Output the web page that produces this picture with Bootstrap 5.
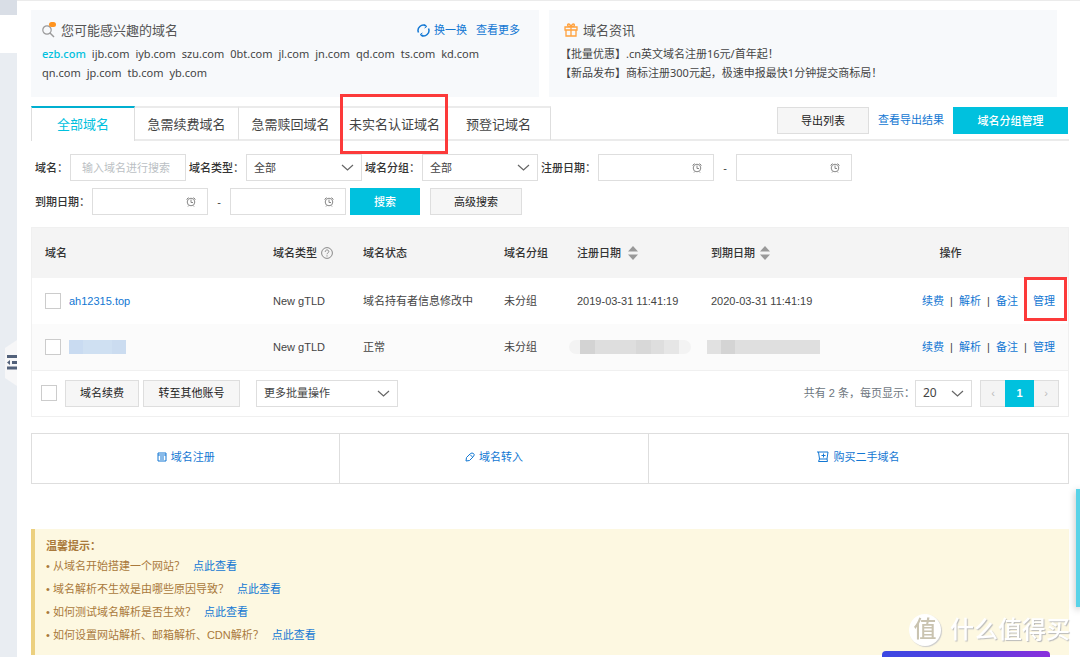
<!DOCTYPE html>
<html lang="zh-CN">
<head>
<meta charset="utf-8">
<meta name="viewport" content="width=device-width, initial-scale=1">
<title>域名列表</title>
<link href="https://cdn.jsdelivr.net/npm/bootstrap@5.3.0/dist/css/bootstrap.min.css" rel="stylesheet">
<style>
:root { --cyan:#00c1de; --blue:#1277d3; --line:#dedede; --soft:#ebebeb; --alert:#fc3a3a; }
body { font:11px/18px "Liberation Sans","Noto Sans CJK SC",sans-serif; color:#444; background:#fff; }
a { color:var(--blue); text-decoration:none; }
svg { fill:none; stroke:currentColor; flex:none; }
.rail { width:17px; background:#e9edf2; flex:none; }
.rail-top { height:15px; background:#d9dee6; }
.rail-gap { height:38px; background:#fff; }
.rail-toggle { left:5px; top:340px; width:12px; height:46px; }
.page-main { padding:0 11px 2px 14px; border-top:1px solid var(--soft); min-width:0; }
.panels { padding:9px 12px 9px 0; gap:10px; }
.panel { background:#f7f9fb; height:87px; padding:11px 11px; font-family:"Noto Sans","Noto Sans CJK SC",sans-serif; }
.panel-head { height:18px; gap:5px; margin-bottom:5px; }
.panel h2 { font-size:13px; line-height:18px; margin:0; font-weight:400; color:#555; }
.panel li { line-height:19px; }
.gift { color:#ffa13d; }
.help { color:#888; }
.words { line-height:19px; column-gap:6px; }
.words a { color:#444; }
.words a.hot { color:var(--cyan); font-weight:500; }
.tabbar { border-bottom:2px solid var(--soft); height:35px; }
.tabs { height:35px; }
.tabs a { width:104px; height:34px; font-size:13px; line-height:33px; color:#444; border-top:2px solid var(--soft); border-right:1px solid var(--line); text-align:center; }
.tabs a.on { height:35px; background:#fff; border-top-color:#00afd0; border-left:1px solid var(--line); color:var(--cyan); }
.tab-tools { gap:9px; padding:1px 1px 0 0; }
.ring { position:absolute; border:3px solid var(--alert); z-index:3; pointer-events:none; }
.ring-tab { inset:-14px -2px -14px -3px; }
.ring-link { inset:-18px -12px -14px -9px; }
.act { height:27px; border-radius:0; font-size:11px; line-height:18px; padding:0; }
.act-gray { background:#f6f6f6; border:1px solid var(--line); color:#222; }
.act-cyan { background:var(--cyan); border:1px solid var(--cyan); color:#fff; font-weight:500; }
.w92 { width:92px; } .w70 { width:70px; } .w115 { width:115px; } .w74 { width:74px; } .w97 { width:97px; }
.filters { padding:13px 4px 12px; gap:7px 3px; }
.filter-go { gap:10px; margin-left:1px; }
.pair { gap:2px; }
.pair label { font-weight:500; color:#333; }
.box, .pick { height:27px; width:116px; border:1px solid var(--line); border-radius:0; font-size:11px; line-height:18px; color:#444; padding:3px 11px; }
.box::placeholder { color:#bbbfc4; }
.pick { padding:3px 24px 3px 7px; background-position:right 7px center; background-size:13px 13px;
 background-image:url("data:image/svg+xml,%3Csvg xmlns='http://www.w3.org/2000/svg' viewBox='0 0 13 13' fill='none' stroke='%23666' stroke-width='1.2'%3E%3Cpath d='M1 4l5.5 5L12 4'/%3E%3C/svg%3E"); }
.clock { position:absolute; right:12px; top:9px; color:#888; }
.dash { width:22px; text-align:center; }
.listing { border:1px solid #f0f0f0; }
.grid-data { table-layout:fixed; width:100%; }
.grid-data th { background:#f4f4f4; height:50px; font-weight:500; color:#333; padding:0 8px; }
.grid-data td { height:46px; padding:0 8px; }
.grid-data tbody tr:last-child { background:#fbfbfb; border-bottom:1px solid #f0f0f0; }
.grid-data th:first-child, .grid-data td:first-child { padding-left:13px; }
.grid-data .ops { text-align:right; padding-right:13px; }
.c-type { width:90px; } .c-state { width:141px; } .c-group { width:73px; } .c-reg { width:134px; } .c-exp { width:130px; } .c-ops { width:235px; }
.ops span.bar { display:inline-block; width:15px; text-align:center; }
.tick { width:16px; height:16px; border:1px solid #ccc; border-radius:0 !important; margin:0; flex:none; }
.hid { height:14px; }
.hid-name { width:57px; background:linear-gradient(90deg,#c9dbf1 25%,#cfe0f2 25% 75%,#cbdcf0 75%); }
.hid-reg { width:122px; margin-left:-8px; border-radius:7px; background:linear-gradient(90deg,#f3f3f3 9%,#d3d3d3 9% 21%,#dedede 21% 55%,#d8d8d8 55% 67%,#dedede 67% 78%,#e6e6e6 78% 90%,#f3f3f3 90%); }
.hid-exp { width:113px; margin-left:-4px; background:linear-gradient(90deg,#e1e1e1 12%,#d4d4d4 12% 25%,#dfdfdf 25%); }
.batch { height:45px; padding:0 9px; }
.pick-more { width:142px; } .pick-size { width:57px; font-family:"Noto Sans",sans-serif; font-size:12px; }
.pg { gap:0; margin:0; }
.pg .page-link { width:26px; height:27px; padding:0; font-size:11px; line-height:25px; text-align:center; border-radius:0 !important; border-color:var(--line); background:#f4f4f4; color:#bbb; margin:0; }
.pg .active .page-link { width:29px; background:var(--cyan); border-color:var(--cyan); color:#fff; font-weight:700; }
.quick { margin-top:16px; border:1px solid var(--line); height:51px; padding-bottom:2px; }
.quick a { flex:22 1 0; gap:4px; margin-bottom:-2px; padding-bottom:2px; }
.quick a + a { border-left:1px solid var(--line); }
.quick a:last-child { flex-grow:30; }
.tips { margin-top:45px; background:#fdf8e1; border-left:4px solid #ecd07f; padding:8px 11px; color:#a9793b; }
.tips h3 { font-size:11px; line-height:18px; font-weight:700; margin:0; }
.tips li { line-height:23px; }
.tips a { margin-left:8px; }
.brand-mark { position:fixed; right:10px; bottom:10px; color:#fff; gap:9px; font-size:24px; line-height:34px; font-weight:500; text-shadow:1px 1px 1px #bbb; white-space:nowrap; }
.brand-mark i { width:32px; height:32px; line-height:30px; border-radius:50%; background:#fff; color:#c9c3b0; text-align:center; text-shadow:none; box-shadow:1px 1px 1px #ccc; font-size:23px; font-style:normal; }
.promo { position:fixed; right:30px; bottom:0; width:168px; height:6px; border-radius:4px 4px 0 0; background:linear-gradient(90deg,#3b48e2,#5d3bdf 60%,#8a2fdc); }
.side-tab { position:fixed; right:0; top:489px; width:4px; height:118px; background:#59d3e8; box-shadow:0 2px 7px #aaa; }
</style>
</head>
<body>
<div class="d-flex min-vh-100">
 <aside class="rail position-relative">
  <div class="rail-top"></div><div class="rail-gap"></div>
  <svg class="rail-toggle position-absolute" viewBox="0 0 12 46"><path d="M12 0v46L0 38V8z" fill="#f7f7f8" stroke="none"/><path d="M2 16.500h10M7 22.500h5M2 28h10" stroke="#52617a" stroke-width="3"/><path d="M2 22.500l3-2.500v5z" fill="#52617a" stroke="none"/></svg>
 </aside>
 <main class="page-main flex-grow-1">
  <div class="panels d-flex">
   <section class="panel flex-fill w-50">
    <div class="panel-head d-flex align-items-center">
     <svg width="14" height="16" viewBox="0 0 14 16"><circle cx="5" cy="8" r="4.200" stroke="#999" stroke-width="1.200"/><path d="M8 11l4 4" stroke="#999" stroke-width="1.400"/><rect x="7" y="0" width="7" height="5" rx="2.500" fill="#ff9420" stroke="none"/></svg>
     <h2>您可能感兴趣的域名</h2>
     <a class="ms-auto d-flex align-items-center gap-1" href="#"><svg width="13" height="13" viewBox="0 0 13 13" stroke-width="1.500"><path d="M1.500 8.500A5.200 5.200 0 0 1 9 2M11.500 4.500A5.200 5.200 0 0 1 4 11"/><path d="M7.500.500L9.800 2.500 7.600 4M5.500 12.500L3.200 10.500 5.400 9" stroke-width="1"/></svg>换一换</a>
     <a class="ms-1 me-2" href="#">查看更多</a>
    </div>
    <div class="words d-flex flex-wrap pe-5"><a class="hot" href="#">ezb.com</a><a href="#">ijb.com</a><a href="#">iyb.com</a><a href="#">szu.com</a><a href="#">0bt.com</a><a href="#">jl.com</a><a href="#">jn.com</a><a href="#">qd.com</a><a href="#">ts.com</a><a href="#">kd.com</a><a href="#">qn.com</a><a href="#">jp.com</a><a href="#">tb.com</a><a href="#">yb.com</a></div>
   </section>
   <section class="panel flex-fill w-50">
    <div class="panel-head d-flex align-items-center px-1">
     <svg class="gift" width="14" height="14" viewBox="0 0 14 14" stroke-width="1.300"><path d="M1 4h12v3H1zM2 7v6h10V7M7 4v9M7 4C3 4 3 1 4.500 1S7 4 7 4s1-3 2.500-3S11 4 7 4"/></svg>
     <h2>域名资讯</h2>
    </div>
    <ul class="list-unstyled mb-0"><li>【批量优惠】.cn英文域名注册16元/首年起！</li><li>【新品发布】商标注册300元起，极速申报最快1分钟提交商标局！</li></ul>
   </section>
  </div>

  <div class="tabbar d-flex justify-content-between">
   <nav class="tabs d-flex">
    <a class="on" href="#">全部域名</a><a href="#">急需续费域名</a><a href="#">急需赎回域名</a><a class="position-relative" href="#">未实名认证域名<span class="ring ring-tab"></span></a><a href="#">预登记域名</a>
   </nav>
   <div class="tab-tools d-flex align-items-start">
    <button type="button" class="btn act act-gray w92">导出列表</button>
    <a class="pt-1" href="#">查看导出结果</a>
    <button type="button" class="btn act act-cyan w115">域名分组管理</button>
   </div>
  </div>

  <form class="filters d-flex flex-wrap">
   <div class="pair d-flex align-items-center"><label for="name">域名：</label><input id="name" class="form-control box" placeholder="输入域名进行搜索"></div>
   <div class="pair d-flex align-items-center"><label for="type">域名类型：</label><select id="type" class="form-select pick"><option>全部</option></select></div>
   <div class="pair d-flex align-items-center"><label for="group">域名分组：</label><select id="group" class="form-select pick"><option>全部</option></select></div>
   <div class="pair d-flex align-items-center"><label for="reg1">注册日期：</label>
    <div class="d-flex align-items-center"><div class="position-relative"><input id="reg1" class="form-control box"><svg class="clock" width="10" height="10" viewBox="0 0 10 10"><circle cx="5" cy="5" r="3.800"/><path d="M5 2.500V5.500H7M.500 2.500L2.500.500M9.500 2.500L7.500.500M2 9.500l1-1M8 9.500l-1-1"/></svg></div><span class="dash">-</span><div class="position-relative"><input aria-label="注册日期止" class="form-control box"><svg class="clock" width="10" height="10" viewBox="0 0 10 10"><circle cx="5" cy="5" r="3.800"/><path d="M5 2.500V5.500H7M.500 2.500L2.500.500M9.500 2.500L7.500.500M2 9.500l1-1M8 9.500l-1-1"/></svg></div></div></div>
   <div class="pair d-flex align-items-center"><label for="exp1">到期日期：</label>
    <div class="d-flex align-items-center"><div class="position-relative"><input id="exp1" class="form-control box"><svg class="clock" width="10" height="10" viewBox="0 0 10 10"><circle cx="5" cy="5" r="3.800"/><path d="M5 2.500V5.500H7M.500 2.500L2.500.500M9.500 2.500L7.500.500M2 9.500l1-1M8 9.500l-1-1"/></svg></div><span class="dash">-</span><div class="position-relative"><input aria-label="到期日期止" class="form-control box"><svg class="clock" width="10" height="10" viewBox="0 0 10 10"><circle cx="5" cy="5" r="3.800"/><path d="M5 2.500V5.500H7M.500 2.500L2.500.500M9.500 2.500L7.500.500M2 9.500l1-1M8 9.500l-1-1"/></svg></div></div></div>
   <div class="filter-go d-flex"><button type="button" class="btn act act-cyan w70">搜索</button><button type="button" class="btn act act-gray w92">高级搜索</button></div>
  </form>

  <div class="listing">
   <table class="grid-data align-middle">
    <colgroup><col><col class="c-type"><col class="c-state"><col class="c-group"><col class="c-reg"><col class="c-exp"><col class="c-ops"></colgroup>
    <thead><tr>
     <th>域名</th>
     <th><div class="d-flex align-items-center gap-1">域名类型<svg class="help" width="12" height="12" viewBox="0 0 12 12"><circle cx="6" cy="6" r="5.400"/><path d="M4.200 4.800c0-2.400 3.600-2.400 3.600-.2C7.800 5.800 6 6 6 7.200M6 8.300v1.200"/></svg></div></th>
     <th>域名状态</th><th>域名分组</th>
     <th><div class="d-flex align-items-center gap-1">注册日期<svg width="14" height="14" viewBox="0 0 14 14"><path d="M8 0l5 5.500H3zM8 14l5-5.500H3z" fill="#999" stroke="none"/></svg></div></th>
     <th><div class="d-flex align-items-center gap-1">到期日期<svg width="12" height="14" viewBox="0 0 12 14"><path d="M6 0l5 5.500H1zM6 14l5-5.500H1z" fill="#999" stroke="none"/></svg></div></th>
     <th class="text-center">操作</th>
    </tr></thead>
    <tbody>
     <tr>
      <td><div class="d-flex align-items-center gap-2"><input type="checkbox" class="form-check-input tick" id="d1"><label for="d1"><a href="#">ah12315.top</a></label></div></td>
      <td>New gTLD</td><td>域名持有者信息修改中</td><td>未分组</td><td>2019-03-31 11:41:19</td><td>2020-03-31 11:41:19</td>
      <td class="ops"><a href="#">续费</a><span class="bar">|</span><a href="#">解析</a><span class="bar">|</span><a href="#">备注</a><span class="bar">|</span><a class="position-relative" href="#">管理<span class="ring ring-link"></span></a></td>
     </tr>
     <tr>
      <td><div class="d-flex align-items-center gap-2"><input type="checkbox" class="form-check-input tick" aria-label="选择域名"><div class="hid hid-name"></div></div></td>
      <td>New gTLD</td><td>正常</td><td>未分组</td><td><div class="hid hid-reg"></div></td><td><div class="hid hid-exp"></div></td>
      <td class="ops"><a href="#">续费</a><span class="bar">|</span><a href="#">解析</a><span class="bar">|</span><a href="#">备注</a><span class="bar">|</span><a href="#">管理</a></td>
     </tr>
    </tbody>
   </table>
   <div class="batch d-flex align-items-center">
    <input type="checkbox" class="form-check-input tick me-2" aria-label="全选">
    <button type="button" class="btn act act-gray w74 me-1">域名续费</button>
    <button type="button" class="btn act act-gray w97 me-3">转至其他账号</button>
    <select class="form-select pick pick-more" aria-label="更多批量操作"><option>更多批量操作</option></select>
    <label for="size" class="ms-auto text-secondary">共有 2 条，每页显示：</label>
    <select id="size" class="form-select pick pick-size me-2"><option>20</option></select>
    <ul class="pagination pg"><li class="page-item"><a class="page-link" href="#" aria-label="上一页">‹</a></li><li class="page-item active"><a class="page-link" href="#">1</a></li><li class="page-item"><a class="page-link" href="#" aria-label="下一页">›</a></li></ul>
   </div>
  </div>

  <nav class="quick d-flex">
   <a class="d-flex align-items-center justify-content-center" href="#"><svg width="10" height="10" viewBox="0 0 10 10"><path d="M1 1h8v8H1zM1 3h8M3 5h4M3 7h4"/></svg>域名注册</a>
   <a class="d-flex align-items-center justify-content-center" href="#"><svg width="10" height="10" viewBox="0 0 10 10"><path d="M1 9l.500-3.500 4-4Q7 .500 8.500 1.500T8.500 4.500l-4 4zM5 2.500L7.500 5"/></svg>域名转入</a>
   <a class="d-flex align-items-center justify-content-center" href="#"><svg width="12" height="12" viewBox="0 0 12 12"><path d="M0 1h11L10 8H2.500L1.500 1M4.500 4.500h4M6.500 2.500v4M2.500 8L1.500 10.500h9L10 8"/></svg>购买二手域名</a>
  </nav>

  <section class="tips">
   <h3>温馨提示：</h3>
   <ul class="list-unstyled mb-0">
    <li>• 从域名开始搭建一个网站？<a href="#">点此查看</a></li>
    <li>• 域名解析不生效是由哪些原因导致？<a href="#">点此查看</a></li>
    <li>• 如何测试域名解析是否生效？<a href="#">点此查看</a></li>
    <li>• 如何设置网站解析、邮箱解析、CDN解析？<a href="#">点此查看</a></li>
   </ul>
  </section>
 </main>
</div>
<div class="side-tab"></div>
<div class="promo"></div>
<div class="brand-mark d-flex align-items-center"><i>值</i><span>什么值得买</span></div>
<script src="https://cdn.jsdelivr.net/npm/bootstrap@5.3.0/dist/js/bootstrap.bundle.min.js"></script>
</body>
</html>
